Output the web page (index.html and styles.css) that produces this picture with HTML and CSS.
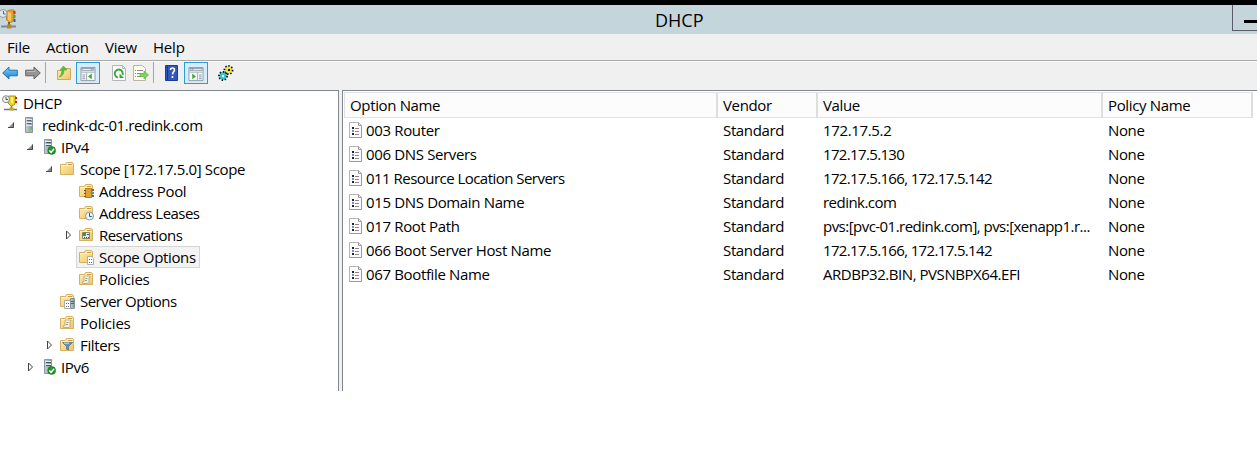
FILE: index.html
```html
<!DOCTYPE html>
<html lang="en">
<head>
<meta charset="utf-8">
<title>DHCP</title>
<link rel="stylesheet" href="styles.css">
</head>
<body>
<svg class="defs" width="0" height="0">
  <defs>
    <linearGradient id="gold" x2="1" y2="1"><stop stop-color="#ffeeb0"/><stop offset="1" stop-color="#ecc66a"/></linearGradient>
    <linearGradient id="steel"><stop stop-color="#c6d0d5"/><stop offset="1" stop-color="#84939b"/></linearGradient>
    <linearGradient id="blue" x2="0" y2="1"><stop stop-color="#7fd0fa"/><stop offset="1" stop-color="#1583d6"/></linearGradient>
    <symbol id="open" viewBox="0 0 8 10"><path d="M7 2v6H1z" fill="#8a8a8a"/><path d="M6.500 2.500v5H1" fill="none" stroke="#4a4a4a"/></symbol>
    <symbol id="closed" viewBox="0 0 8 10"><path d="M2.500 1v8l4-4z" fill="#fff" stroke="#444"/></symbol>
    <symbol id="folder" viewBox="0 0 16 16"><path d="M1.500 3.500h5l1-2h6l1 1v11h-13z" fill="url(#gold)" stroke="#d5b061"/><path d="M8 2.500h5M2 4.500h12" stroke="#fff5cb"/><path d="M9 3.500h4" stroke="#c89a45"/></symbol>
    <symbol id="server" viewBox="0 0 16 16"><path d="M4.500.5h7v15h-7z" fill="url(#steel)" stroke="#8b999f"/><path d="M5 2.500h6M5 5.500h6M5 8.500h6" stroke="#e3eaec"/><path d="M6 3.500h4M6 6.500h4" stroke="#5b6a72"/><path d="M9 13h2v2H9z" fill="#78e044"/></symbol>
    <symbol id="server-ok" viewBox="0 0 16 16"><path d="M4.500.5h7v14h-7z" fill="url(#steel)" stroke="#8b999f"/><path d="M5 2.500h6M5 5.500h6" stroke="#e9f0f2"/><path d="M6 3.500h5M6 6.500h5" stroke="#45545c"/><circle cx="11.700" cy="11.500" r="3.900" fill="#21962a" stroke="#0b741d" stroke-width=".6"/><path d="M9.400 11.500l1.700 1.800 3-3.500" fill="none" stroke="#fff" stroke-width="1.500"/></symbol>
    <symbol id="pool" viewBox="0 0 16 16"><use href="#folder"/><path d="M7.500 5.500h6v9h-6z" fill="#e0a138" stroke="#b07a25"/><path d="M6 7.500h2M6 10.500h2M6 13.500h2" stroke="#795414"/><path d="M14 6h2v2h-2z" fill="#de4325"/><path d="M14 9h2v2h-2z" fill="#35a6a8"/><path d="M14 12h2v2h-2z" fill="#396fc4"/></symbol>
    <symbol id="lease" viewBox="0 0 16 16"><use href="#folder"/><circle cx="11.500" cy="11" r="4" fill="#e9f4fc" stroke="#8498a6"/><path d="M11.500 8v3.500h2.300" stroke="#36566f" fill="none"/></symbol>
    <symbol id="reserve" viewBox="0 0 16 16"><use href="#folder"/><path d="M4.500 5.500h7v6h-7z" fill="#e4ecec" stroke="#8b8566"/><path d="M5 6h3v3H5z" fill="#2a9f48"/><path d="M9 7h2v1H9zM6 10h1v1H6zM8 10h1v1H8zM10 10h1v1h-1z" fill="#34555e"/></symbol>
    <symbol id="scope" viewBox="0 0 16 16"><use href="#folder"/><path d="M9.500 7.500h4l2 2v6h-6z" fill="#fff" stroke="#a9aeb4"/><path d="M11 10h1v1h-1zM13 10h1v1h-1zM11 13h1v1h-1zM13 13h1v1h-1z" fill="#53667a"/></symbol>
    <symbol id="policy" viewBox="0 0 16 16"><use href="#folder"/><path d="M6 5h6l-1 2v4.500q0 1-2 1H4.500V10.500H6z" fill="#f4f0df" stroke="#b0a57f" stroke-width=".8"/><path d="M7.500 7.500h2M7 9.500h2" stroke="#8b8169" stroke-width=".8"/></symbol>
    <symbol id="srvopt" viewBox="0 0 16 16"><use href="#folder"/><path d="M5.500 7.500h6v8h-6z" fill="#fff" stroke="#aaa"/><path d="M7 10.500h1M9 10.500h1M7 13.500h1M9 13.500h1" stroke="#52657a"/><path d="M11.500 5.500h4v10h-4z" fill="url(#steel)" stroke="#87959d"/><path d="M12 8.500h3M12 10.500h3" stroke="#56656d"/><path d="M14 13h1v2h-1z" fill="#61dc33"/></symbol>
    <symbol id="filter" viewBox="0 0 16 16"><use href="#folder"/><path d="M3.500 5.500h10l-4 4V13l-2-1V9.500z" fill="#6c91b2" stroke="#526c84" stroke-width=".7"/><path d="M5 6.200h5" stroke="#c5e1f3"/></symbol>
    <symbol id="dhcp" viewBox="0 0 16 16"><path d="M6.500 1h7l-.5 8-3 2h-1l-3-3z" fill="#f0d51a" stroke="#a89218"/><path d="M9 2h2v6H9z" fill="#fff577"/><path d="M14 2v2M14 6v2" stroke="#dc1b15" stroke-width="2"/><path d="M9.500 11v3M2 14.500h13" stroke="#69798a" stroke-width="1.500"/><path d="M7.500 12.500h4v3h-4z" fill="#c7a80f"/><circle cx="4" cy="4.200" r="3.500" fill="#eef0f1" stroke="#888"/><path d="M4 2v2.500h2" stroke="#555" fill="none"/></symbol>
    <symbol id="dhcp-title" viewBox="0 0 20 20"><path d="M6.500 2.500l3-1.500h4.500v10l-3 2.500-4.500-2.500z" fill="#dfa22e" stroke="#bd8427"/><path d="M8 3l3 1v9l-3-2z" fill="#f5c95d"/><path d="M14.500 2v3" stroke="#d52c20" stroke-width="2"/><path d="M14.500 6v3" stroke="#33a957" stroke-width="2"/><path d="M14.500 10v3" stroke="#2f65bc" stroke-width="2"/><path d="M9 13v3" stroke="#80641e" stroke-width="2"/><path d="M1 17.500h15" stroke="#7d8b91" stroke-width="2"/><path d="M7 15.500h4.500v4H7z" fill="#bd8427"/><circle cx="3" cy="4.500" r="4" fill="#e0e8ed" stroke="#939ea5"/><path d="M3.500 2v3h2.200" stroke="#546775" fill="none"/></symbol>
    <symbol id="option" viewBox="0 0 13 16"><path d="M.5.500h9l3 3v12H.5z" fill="#fbfbfb" stroke="#b4b4b4"/><path d="M.5 15.500h12v-11M9.500.5v3h3" fill="none" stroke="#999"/><path d="M3 5h2v2H3zM3 11h2v2H3z" fill="#222"/><path d="M3 8h2v2H3z" fill="#8b83a5"/><path d="M6 6.500h4M6 9.500h4M6 12.500h4" stroke="#8b849c"/></symbol>
    <symbol id="back" viewBox="0 0 16 16"><path d="M.7 8L7 2v3.200h8.300v5.600H7V14z" fill="url(#blue)" stroke="#2573ad"/></symbol>
    <symbol id="fwd" viewBox="0 0 16 16"><path d="M15.300 8L9 2v3.200H.7v5.600H9V14z" fill="#949494" stroke="#626262"/><path d="M2 6.500h8V4.500" stroke="#bbb" fill="none"/></symbol>
    <symbol id="up" viewBox="0 0 16 16"><path d="M1.500 5.500h5l2-2h6v11h-13z" fill="url(#gold)" stroke="#c9aa65"/><path d="M3 12q5-1 5-7h3L7.500 1 4 5h2q0 5-3 7z" fill="#53bf37" stroke="#4cab38" stroke-width=".6"/></symbol>
    <symbol id="panel" viewBox="0 0 16 16"><path d="M.5.500h15v14H.5z" fill="#f8fafb" stroke="#8f9aa6"/><path d="M1 1h14v3H1z" fill="#8a98a8"/><path d="M2 2.500h9M12 2.500h1M14 2.500h1" stroke="#fff"/><path d="M1 5.500h14M6.500 6v8" stroke="#9da9b4"/><path d="M2 8.500h3M2 10.500h3M2 12.500h3" stroke="#8292a2"/><path d="M12 7v6l-4-3z" fill="#3caa2d"/></symbol>
    <symbol id="refresh" viewBox="0 0 14 16"><path d="M.5.500h10l3 3v12H.5z" fill="#fff" stroke="#b5b5b5"/><path d="M10.500.5v3h3" fill="none" stroke="#b5b5b5"/><path d="M6 12.500a4 4 0 1 1 4.500-2.500" fill="none" stroke="#36a642" stroke-width="1.900"/><path d="M7.500 8.500v4.500H12z" fill="#36a642"/></symbol>
    <symbol id="export" viewBox="0 0 16 16"><path d="M.5.500h9l3 3v12H.5z" fill="#fffdec" stroke="#bab69f"/><path d="M2 5.500h1M4 5.500h6M2 8.500h1M4 8.500h4M2 11.500h1M4 11.500h4" stroke="#87849b"/><path d="M7 8.500h4V6l4.500 4-4.500 4v-2.500H7z" fill="#82d45b" stroke="#58b43f" stroke-width=".7"/></symbol>
    <symbol id="help" viewBox="0 0 14 16"><path d="M.5.500h12v15H.5z" fill="#3157bb" stroke="#203c91"/><path d="M2.500 1v14" stroke="#1b347c"/><path d="M5.500 5q0-2 2-2t2 2q0 1-1.500 2.500L7.500 9.500M7.500 11v2" fill="none" stroke="#fff" stroke-width="1.600"/></symbol>
    <symbol id="gears" viewBox="0 0 16 16"><circle cx="10.500" cy="5" r="3.700" fill="#f4e23a" stroke="#111" stroke-width="2.500" stroke-dasharray="1.300 1.500"/><circle cx="10.500" cy="5" r="3.200" fill="#f4e23a"/><path d="M10 4h2v2h-2z" fill="#111"/><circle cx="5" cy="11" r="3.700" fill="#30c9d8" stroke="#111" stroke-width="2.500" stroke-dasharray="1.300 1.500"/><circle cx="5" cy="11" r="3.200" fill="#30c9d8"/><path d="M4 10h2v2H4z" fill="#fff"/></symbol>
  </defs>
</svg>
<div class="window">
  <header class="titlebar"><svg class="title-icon"><use href="#dhcp-title"/></svg><h1>DHCP</h1><button class="minimize" aria-label="Minimize"><span></span></button></header>
  <nav class="menu"><span class="m-file">File</span><span class="m-action">Action</span><span class="m-view">View</span><span class="m-help">Help</span></nav>
  <div class="toolbar">
    <svg class="t-back"><use href="#back"/></svg><svg class="t-fwd"><use href="#fwd"/></svg><i class="sep sep-a"></i>
    <svg class="t-up"><use href="#up"/></svg><span class="toggle"><svg><use href="#panel"/></svg></span>
    <svg class="t-refresh"><use href="#refresh"/></svg><svg class="t-export"><use href="#export"/></svg><i class="sep sep-b"></i>
    <svg class="t-help"><use href="#help"/></svg><span class="toggle second"><svg class="flip"><use href="#panel"/></svg></span><svg class="t-gears"><use href="#gears"/></svg>
  </div>
  <main class="panes">
    <div class="tree">
      <div class="node l0"><svg class="icon"><use href="#dhcp"/></svg><span>DHCP</span></div>
      <div class="node l1"><svg class="arrow"><use href="#open"/></svg><svg class="icon"><use href="#server"/></svg><span class="host">redink-dc-01.redink.com</span></div>
      <div class="node l2"><svg class="arrow"><use href="#open"/></svg><svg class="icon"><use href="#server-ok"/></svg><span>IPv4</span></div>
      <div class="node l3"><svg class="arrow"><use href="#open"/></svg><svg class="icon"><use href="#folder"/></svg><span>Scope [172.17.5.0] Scope</span></div>
      <div class="node l4"><svg class="arrow"></svg><svg class="icon"><use href="#pool"/></svg><span>Address Pool</span></div>
      <div class="node l4"><svg class="arrow"></svg><svg class="icon"><use href="#lease"/></svg><span class="snug">Address Leases</span></div>
      <div class="node l4"><svg class="arrow"><use href="#closed"/></svg><svg class="icon"><use href="#reserve"/></svg><span class="snug">Reservations</span></div>
      <div class="node l4"><svg class="arrow"></svg><div class="selected"><svg class="icon"><use href="#scope"/></svg><span>Scope Options</span></div></div>
      <div class="node l4"><svg class="arrow"></svg><svg class="icon"><use href="#policy"/></svg><span class="wide">Policies</span></div>
      <div class="node l3"><svg class="arrow"></svg><svg class="icon"><use href="#srvopt"/></svg><span class="snug">Server Options</span></div>
      <div class="node l3"><svg class="arrow"></svg><svg class="icon"><use href="#policy"/></svg><span class="wide">Policies</span></div>
      <div class="node l3"><svg class="arrow"><use href="#closed"/></svg><svg class="icon"><use href="#filter"/></svg><span>Filters</span></div>
      <div class="node l2"><svg class="arrow"><use href="#closed"/></svg><svg class="icon"><use href="#server-ok"/></svg><span>IPv6</span></div>
    </div>
    <div class="list">
      <div class="row head"><span>Option Name</span><span>Vendor</span><span>Value</span><span>Policy Name</span></div>
      <div class="row"><span><svg><use href="#option"/></svg>003 Router</span><span>Standard</span><span>172.17.5.2</span><span>None</span></div>
      <div class="row"><span><svg><use href="#option"/></svg>006 DNS Servers</span><span>Standard</span><span class="address">172.17.5.130</span><span>None</span></div>
      <div class="row"><span class="snug"><svg><use href="#option"/></svg>011 Resource Location Servers</span><span>Standard</span><span class="address">172.17.5.166, 172.17.5.142</span><span>None</span></div>
      <div class="row"><span><svg><use href="#option"/></svg>015 DNS Domain Name</span><span>Standard</span><span class="snug">redink.com</span><span>None</span></div>
      <div class="row"><span><svg><use href="#option"/></svg>017 Root Path</span><span>Standard</span><span class="snug">pvs:[pvc-01.redink.com], pvs:[xenapp1.r...</span><span>None</span></div>
      <div class="row"><span><svg><use href="#option"/></svg>066 Boot Server Host Name</span><span>Standard</span><span class="address">172.17.5.166, 172.17.5.142</span><span>None</span></div>
      <div class="row"><span><svg><use href="#option"/></svg>067 Bootfile Name</span><span>Standard</span><span class="caps">ARDBP32.BIN, PVSNBPX64.EFI</span><span>None</span></div>
    </div>
  </main>
</div>
</body>
</html>
```

FILE: styles.css
```css
* { box-sizing: border-box; }
body { margin: 0; background: #fff; color: #000; font: 15px/22px "Open Sans", "Noto Sans", sans-serif; letter-spacing: -.35px; overflow: hidden; }
.defs { position: absolute; }
svg { display: block; flex: none; }
.window { width: 1257px; height: 391px; border-top: 5px solid #000; display: flex; flex-direction: column; background: #f0f0f0; }
.titlebar { height: 29px; flex: none; background: #c4d6dc; display: flex; align-items: flex-start; }
.title-icon { width: 20px; height: 20px; margin-top: 4px; }
h1 { margin: 0 0 0 635px; width: 577px; font-size: 18px; line-height: 30px; font-weight: 400; letter-spacing: 0; }
.minimize { width: 25px; height: 26px; padding: 0 0 0 11px; border: 1px solid #5c5c69; border-width: 0 0 1px 1px; background: transparent; }
.minimize span { display: block; height: 3px; background: #000; margin-top: 7px; }
.menu { height: 27px; flex: none; border-bottom: 1px solid #a9a9a9; padding-left: 7px; display: flex; line-height: 27px; letter-spacing: -.2px; }
.m-file { width: 39px; }
.m-action { width: 59px; }
.m-view { width: 48px; }
.toolbar { height: 29px; flex: none; border-top: 1px solid #fafafa; display: flex; align-items: flex-start; }
.toolbar > svg { width: 16px; height: 16px; margin-top: 3px; }
.toolbar .t-back { margin-left: 2px; }
.toolbar .t-fwd { margin-left: 7px; }
.sep { width: 1px; height: 21px; background: #a5a5a5; }
.sep-a { margin-left: 4px; }
.toolbar .t-up { margin-left: 10px; }
.toggle { width: 24px; height: 22px; margin-left: 4px; border: 1px solid #2a9bdd; background: #d9ecfa; padding: 4px 3px; }
.toggle svg { width: 16px; height: 15px; }
.flip { transform: scaleX(-1); }
.toolbar .t-refresh { width: 14px; margin-left: 12px; }
.toolbar .t-export { margin-left: 7px; }
.sep-b { margin-left: 4px; }
.toolbar .t-help { width: 14px; margin-left: 11px; }
.second { margin-left: 5px; }
.toolbar .t-gears { margin-left: 10px; }
.panes { height: 301px; display: flex; gap: 3px; }
.tree { width: 339px; flex: none; background: #fff; border: 1px solid #828790; border-width: 1px 1px 0 0; padding-top: 1px; }
.node { height: 22px; display: flex; align-items: center; white-space: nowrap; }
.l0 { padding-left: 2px; }
.l1 { padding-left: 7px; }
.l2 { padding-left: 26px; }
.l3 { padding-left: 45px; }
.l4 { padding-left: 64px; }
.arrow { width: 8px; height: 10px; margin-right: 6px; }
.icon { width: 16px; height: 16px; margin-right: 5px; }
.host { letter-spacing: -.42px; }
.snug { letter-spacing: -.53px; }
.wide { letter-spacing: -.2px; }
.address { letter-spacing: -.65px; }
.caps { letter-spacing: -.45px; }
.selected { height: 22px; width: 124px; margin-left: -2px; padding-left: 1px; display: flex; align-items: center; border: 1px solid #d5d5d5; background: #f3f3f3; }
.list { flex: 1; background: #fff; border: 1px solid #828790; border-width: 1px 0 0 1px; padding: 1px 0 0 1px; }
.row { display: grid; grid-template-columns: 374px 100px 285px 150px; height: 24px; line-height: 24px; white-space: nowrap; }
.row span { padding-left: 5px; display: flex; align-items: center; }
.row svg { width: 13px; height: 16px; margin-right: 4px; }
.head { grid-template-columns: 373px 100px 285px 150px; width: 909px; height: 26px; line-height: 25px; background: #fcfcfc; border: 1px solid #e2e2e2; border-width: 1px 0 1px 1px; }
.head span { border-right: 2px solid #dedede; }
```
